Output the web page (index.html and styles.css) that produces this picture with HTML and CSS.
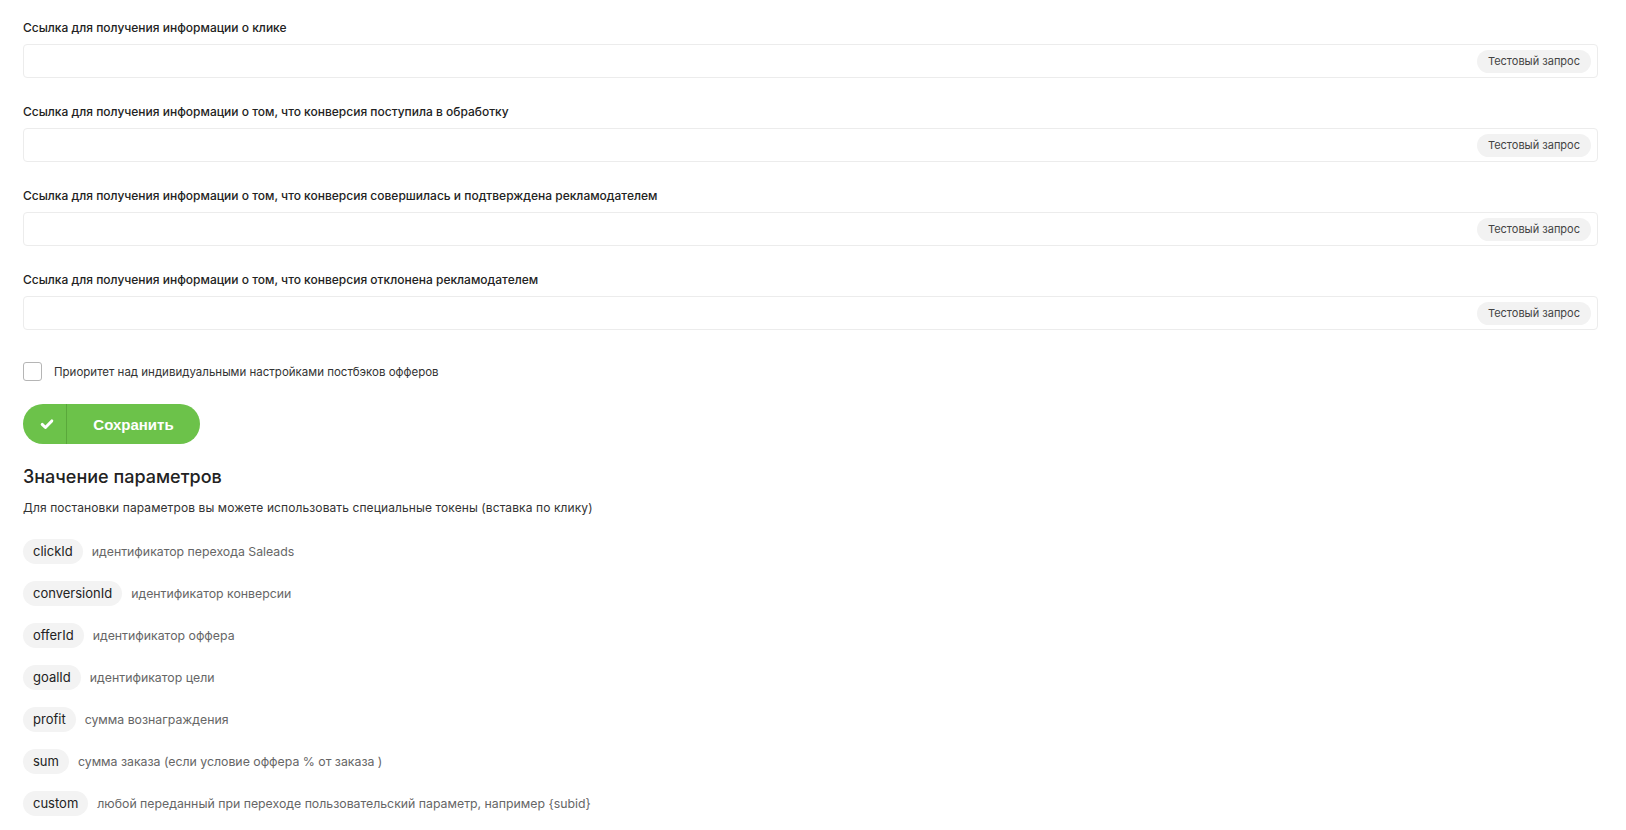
FILE: index.html
```html
<!DOCTYPE html>
<html lang="ru">
  <head>
    <meta charset="UTF-8" />
    <title>Постбэки</title>
    <link rel="stylesheet" href="styles.css">
  </head>
  <body>
    <main class="page">
      <section class="postbacks">
        <div class="field">
          <label class="field-label">Ссылка для получения информации о клике</label>
          <div class="field-input">
            <input type="text" />
            <button class="test-button" type="button">Тестовый запрос</button>
          </div>
        </div>
        <div class="field">
          <label class="field-label">Ссылка для получения информации о том, что конверсия поступила в обработку</label>
          <div class="field-input">
            <input type="text" />
            <button class="test-button" type="button">Тестовый запрос</button>
          </div>
        </div>
        <div class="field">
          <label class="field-label">Ссылка для получения информации о том, что конверсия совершилась и подтверждена рекламодателем</label>
          <div class="field-input">
            <input type="text" />
            <button class="test-button" type="button">Тестовый запрос</button>
          </div>
        </div>
        <div class="field">
          <label class="field-label">Ссылка для получения информации о том, что конверсия отклонена рекламодателем</label>
          <div class="field-input">
            <input type="text" />
            <button class="test-button" type="button">Тестовый запрос</button>
          </div>
        </div>
      </section>

      <label class="checkbox-row">
        <span class="checkbox"></span>
        Приоритет над индивидуальными настройками постбэков офферов
      </label>

      <button class="save-button" type="button">
        <span class="save-icon">
          <svg viewBox="0 0 16 16" fill="none" stroke="currentColor" stroke-width="3.4" stroke-linecap="round" stroke-linejoin="round">
            <polyline points="2.5 8.5 6.2 12 13.5 4.5"></polyline>
          </svg>
        </span>
        <span class="save-text">Сохранить</span>
      </button>

      <!-- список токенов -->
      <section class="params">
        <h2>Значение параметров</h2>
        <p class="hint">Для постановки параметров вы можете использовать специальные токены (вставка по клику)</p>
        <ul class="tokens">
          <li><span class="token">clickId</span><span class="token-desc">идентификатор перехода Saleads</span></li>
          <li><span class="token">conversionId</span><span class="token-desc">идентификатор конверсии</span></li>
          <li><span class="token">offerId</span><span class="token-desc">идентификатор оффера</span></li>
          <li><span class="token">goalId</span><span class="token-desc">идентификатор цели</span></li>
          <li><span class="token">profit</span><span class="token-desc">сумма вознаграждения</span></li>
          <li><span class="token">sum</span><span class="token-desc">сумма заказа (если условие оффера % от заказа )</span></li>
          <li><span class="token">custom</span><span class="token-desc">любой переданный при переходе пользовательский параметр, например {subid}</span></li>
        </ul>
      </section>
    </main>
  </body>
</html>
```

FILE: styles.css
```css
* {
  box-sizing: border-box;
  margin: 0;
  padding: 0;
}
body {
  font-family: Inter, "Noto Sans", sans-serif;
  background: #ffffff;
  color: #222222;
  overflow: hidden;
}
.page {
  padding: 20px 28px 0 23px;
}
/* поля постбэков */
.field {
  margin-bottom: 26px;
}
.field-label {
  display: block;
  font-size: 12px;
  line-height: 16px;
  font-weight: 500;
  color: #222222;
  margin-bottom: 8px;
}
.field-input {
  display: flex;
  align-items: center;
  height: 34px;
  border: 1px solid #ececec;
  border-radius: 4px;
  padding: 0 6px 0 12px;
}
.field-input input {
  flex: 1;
  border: none;
  outline: none;
  height: 100%;
  font: inherit;
  background: transparent;
}
.test-button {
  border: none;
  background: #f2f2f2;
  color: #444444;
  font-family: Inter, sans-serif;
  font-size: 11px;
  height: 23px;
  padding: 0 11px;
  border-radius: 12px;
  cursor: pointer;
}
/* чекбокс */
.checkbox-row {
  display: flex;
  align-items: center;
  gap: 12px;
  font-size: 11.5px;
  color: #333333;
  margin-top: 32px;
  cursor: pointer;
}
.checkbox {
  width: 19px;
  height: 19px;
  border: 1px solid #b5b5b5;
  border-radius: 3px;
  background: #ffffff;
}
/* кнопка сохранения */
.save-button {
  display: flex;
  align-items: stretch;
  width: 177px;
  height: 40px;
  margin-top: 23px;
  border: none;
  border-radius: 20px;
  background: #6cc24a;
  color: #ffffff;
  cursor: pointer;
  overflow: hidden;
}
.save-icon {
  width: 44px;
  display: flex;
  align-items: center;
  justify-content: center;
  border-right: 1px solid #5aa83b;
  padding-left: 4px;
}
.save-icon svg {
  width: 14px;
  height: 14px;
}
.save-text {
  flex: 1;
  display: flex;
  align-items: center;
  justify-content: center;
  font-family: "Liberation Sans", Arial, sans-serif;
  font-weight: bold;
  font-size: 15px;
}
/* параметры */
.params h2 {
  font-size: 18px;
  line-height: 24px;
  font-weight: 500;
  color: #222222;
  margin-top: 21px;
}
.hint {
  font-size: 12px;
  line-height: 16px;
  color: #333333;
  margin-top: 11px;
  letter-spacing: 0.1px;
}
.tokens {
  list-style: none;
  margin-top: 23px;
}
.tokens li {
  display: flex;
  align-items: center;
  gap: 9px;
  margin-bottom: 17px;
}
.token {
  height: 25px;
  line-height: 25px;
  padding: 0 10px;
  border-radius: 13px;
  background: #f3f3f3;
  font-size: 13px;
  color: #222222;
  cursor: pointer;
}
.token-desc {
  font-size: 12.3px;
  color: #666666;
}
```
